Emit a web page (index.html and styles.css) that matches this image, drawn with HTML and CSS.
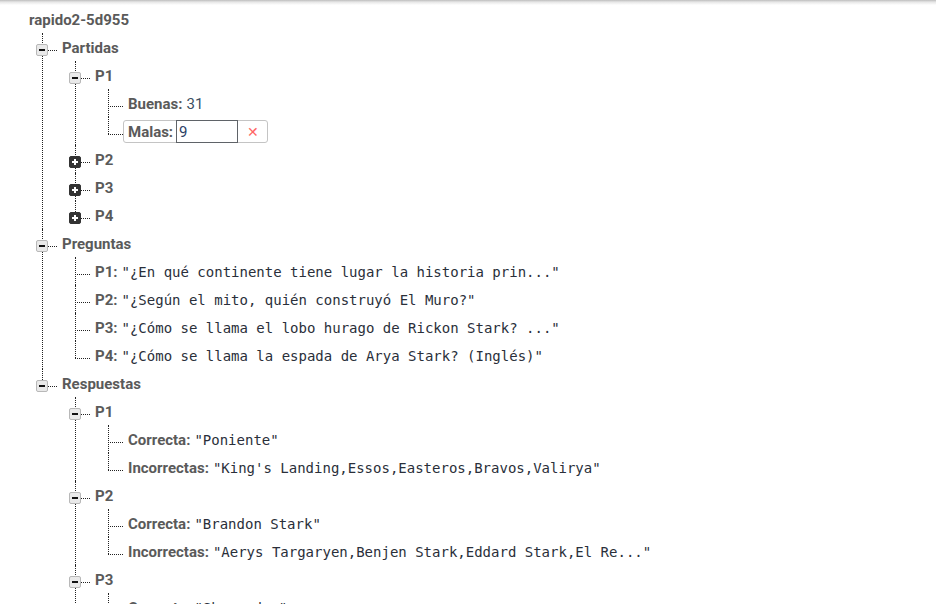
FILE: index.html
```html
<!DOCTYPE html>
<html>
<head>
<meta charset="utf-8">
<link rel="stylesheet" href="styles.css">
</head>
<body>
<div class="topshadow"></div>
<div class="tree">
  <div class="row root"><span class="key">rapido2-5d955</span></div>
  <ul class="kids">
    <li>
      <div class="row"><span class="tog minus"></span><span class="key">Partidas</span></div>
      <ul class="kids">
        <li>
          <div class="row"><span class="tog minus"></span><span class="key">P1</span></div>
          <ul class="kids">
            <li><div class="row"><span class="key">Buenas:</span><span class="num">31</span></div></li>
            <li>
              <div class="row">
                <div class="editor">
                  <span class="key">Malas:</span>
                  <input class="edit-input" type="text" value="9">
                  <span class="del">✕</span>
                </div>
              </div>
            </li>
          </ul>
        </li>
        <li><div class="row"><span class="tog plus"></span><span class="key">P2</span></div></li>
        <li><div class="row"><span class="tog plus"></span><span class="key">P3</span></div></li>
        <li><div class="row"><span class="tog plus"></span><span class="key">P4</span></div></li>
      </ul>
    </li>
    <li>
      <div class="row"><span class="tog minus"></span><span class="key">Preguntas</span></div>
      <ul class="kids">
        <li><div class="row"><span class="key">P1:</span><span class="str">"¿En qué continente tiene lugar la historia prin..."</span></div></li>
        <li><div class="row"><span class="key">P2:</span><span class="str">"¿Según el mito, quién construyó El Muro?"</span></div></li>
        <li><div class="row"><span class="key">P3:</span><span class="str">"¿Cómo se llama el lobo hurago de Rickon Stark? ..."</span></div></li>
        <li><div class="row"><span class="key">P4:</span><span class="str">"¿Cómo se llama la espada de Arya Stark? (Inglés)"</span></div></li>
      </ul>
    </li>
    <li>
      <div class="row"><span class="tog minus"></span><span class="key">Respuestas</span></div>
      <ul class="kids">
        <li>
          <div class="row"><span class="tog minus"></span><span class="key">P1</span></div>
          <ul class="kids">
            <li><div class="row"><span class="key">Correcta:</span><span class="str">"Poniente"</span></div></li>
            <li><div class="row"><span class="key">Incorrectas:</span><span class="str">"King's Landing,Essos,Easteros,Bravos,Valirya"</span></div></li>
          </ul>
        </li>
        <li>
          <div class="row"><span class="tog minus"></span><span class="key">P2</span></div>
          <ul class="kids">
            <li><div class="row"><span class="key">Correcta:</span><span class="str">"Brandon Stark"</span></div></li>
            <li><div class="row"><span class="key">Incorrectas:</span><span class="str">"Aerys Targaryen,Benjen Stark,Eddard Stark,El Re..."</span></div></li>
          </ul>
        </li>
        <li>
          <div class="row"><span class="tog minus"></span><span class="key">P3</span></div>
          <ul class="kids">
            <li><div class="row"><span class="key">Correcta:</span><span class="str">"Shaggydog"</span></div></li>
            <li><div class="row"><span class="key">Incorrectas:</span><span class="str">"Fantasma,Viento Gris,Dama,Nymeria"</span></div></li>
          </ul>
        </li>
        <li>
          <div class="row"><span class="tog minus"></span><span class="key">P4</span></div>
          <ul class="kids">
            <li><div class="row"><span class="key">Correcta:</span><span class="str">"Needle"</span></div></li>
            <li><div class="row"><span class="key">Incorrectas:</span><span class="str">"Ice,Longclaw,Oathkeeper,Dawn"</span></div></li>
          </ul>
        </li>
      </ul>
    </li>
  </ul>
</div>
</body>
</html>
```
FILE: styles.css
```css
html, body {
  margin: 0;
  padding: 0;
  background: #fff;
  overflow: hidden;
  height: 100%;
}
body {
  font-family: Roboto, "Liberation Sans", sans-serif;
  font-size: 15px;
  color: #5f6368;
}
.topshadow {
  height: 5px;
  background: linear-gradient(#bdbdbd, #e6e6e6 40%, #ffffff);
}
.tree {
  padding-left: 29px;
}
.row {
  height: 28px;
  box-sizing: border-box;
  padding-top: 2px;
  display: flex;
  align-items: center;
  white-space: nowrap;
}
.key {
  font-weight: 700;
  color: #5a5a5a;
}
.num {
  margin-left: 4px;
  color: #3c4f63;
}
.str {
  margin-left: 4px;
  font-family: "DejaVu Sans Mono", "Liberation Mono", monospace;
  font-size: 14px;
  color: #2a2f3a;
}
ul.kids {
  list-style: none;
  margin: 0 0 0 13px;
  padding: 0;
}
ul.kids > li {
  position: relative;
  padding-left: 20px;
}
ul.kids > li::before {
  content: "";
  position: absolute;
  left: 0;
  top: 0;
  bottom: 0;
  border-left: 1px dotted #222;
}
ul.kids > li:last-child::before {
  bottom: auto;
  height: 17px;
}
ul.kids > li::after {
  content: "";
  position: absolute;
  left: 0;
  top: 17px;
  width: 15px;
  border-top: 1px dotted #222;
}
.tog {
  position: absolute;
  left: -6px;
  top: 11px;
  width: 12px;
  height: 12px;
  box-sizing: border-box;
  border-radius: 2px;
  z-index: 1;
}
.tog.minus {
  background: #e9e9e9;
  border: 1px solid #b8b8b8;
}
.tog.minus::before {
  content: "";
  position: absolute;
  left: 2px;
  top: 4px;
  width: 6px;
  height: 2px;
  background: #111;
}
.tog.plus {
  background: #333;
  border: 1px solid #333;
}
.tog.plus::before {
  content: "";
  position: absolute;
  left: 2px;
  top: 4px;
  width: 6px;
  height: 2px;
  background: #fff;
}
.tog.plus::after {
  content: "";
  position: absolute;
  left: 4px;
  top: 2px;
  width: 2px;
  height: 6px;
  background: #fff;
}
.editor {
  display: flex;
  align-items: stretch;
  margin-left: -5px;
  margin-top: -1px;
  height: 23px;
  box-sizing: border-box;
  border: 1px solid #c4c4c4;
  border-radius: 3px;
  padding-left: 4px;
}
.editor .key {
  display: flex;
  align-items: center;
}
.edit-input {
  width: 62px;
  height: 23px;
  margin: -1px 0 -1px 3px;
  box-sizing: border-box;
  border: 1px solid #5f6368;
  padding: 0 2px;
  font-family: Roboto, "Liberation Sans", sans-serif;
  font-size: 15px;
  color: #2c3e66;
  outline: none;
}
.del {
  width: 29px;
  display: flex;
  align-items: center;
  justify-content: center;
  color: #f66;
  font-size: 14px;
}
```
